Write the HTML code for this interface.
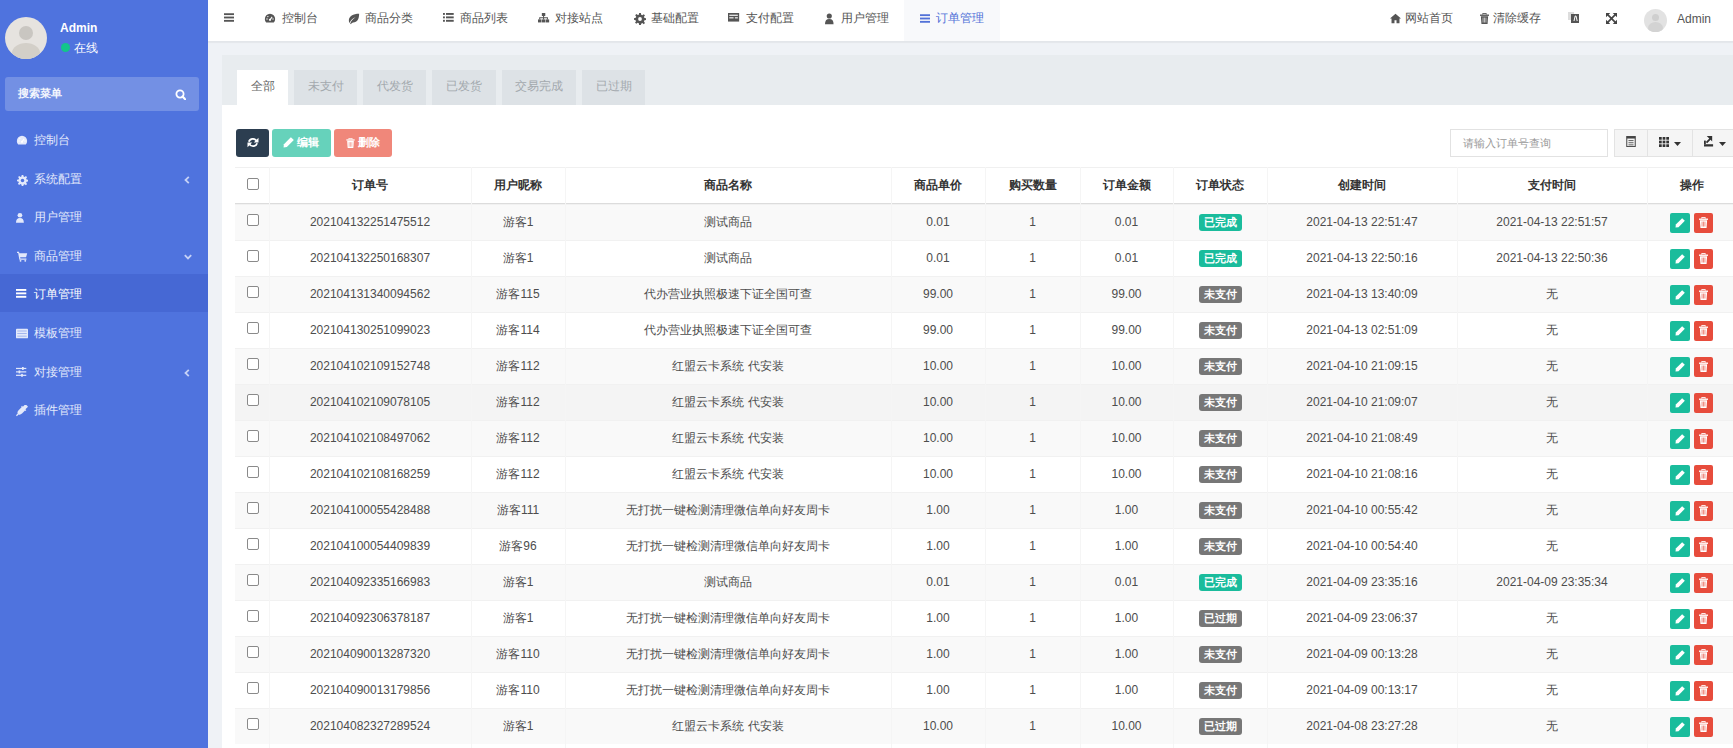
<!DOCTYPE html><html><head><meta charset="utf-8"><style>
*{box-sizing:border-box;margin:0;padding:0}
html,body{width:1733px;height:748px;overflow:hidden}
body{position:relative;background:#eff2f6;font-family:"Liberation Sans",sans-serif;font-size:12px;color:#333}
.abs{position:absolute}
#side{left:0;top:0;width:208px;height:748px;background:#4f73de}
.mi{position:absolute;left:0;width:208px;height:38px;color:#e8eefc;font-size:12px;line-height:40px}
.mi svg{position:absolute;left:16px;top:15px}
.mi span{position:absolute;left:34px;top:0}
.mi .chev{position:absolute;left:185px;top:15px}
#hdr{left:208px;top:0;width:1525px;height:42px;background:#fff;border-bottom:1px solid #e3e6ea;box-shadow:0 1px 1px rgba(0,0,0,.04)}
.nav{position:absolute;top:0;height:41px;line-height:37px;color:#555;font-size:12px;white-space:nowrap}
.nav svg{position:absolute}
#panel{left:222px;top:55px;width:1511px;height:693px;background:#fff}
#ph{left:222px;top:55px;width:1511px;height:50px;background:#e8ecef}
.tab{position:absolute;top:70px;height:35px;line-height:33px;background:#dde2e6;color:#a3a9ae;text-align:center;font-size:12px}
.tab.act{background:#fff;color:#666}
.btn{position:absolute;top:129px;height:28px;border-radius:3px;color:#fff;font-size:11px;font-weight:bold;line-height:28px}
.cell{position:absolute;text-align:center;white-space:nowrap;overflow:hidden}
.vl{position:absolute;width:1px;background:#f5f5f5}
.hl{position:absolute;height:1px;background:#e5e5e5}
.cb{position:absolute;left:247px;width:12px;height:12px;border:1px solid #8a8a8a;border-radius:2px;background:#fff}
.badge{display:inline-block;height:17px;line-height:17px;padding:0 5px;border-radius:3px;color:#fff;font-size:11px;font-weight:bold;vertical-align:middle}
.op{position:absolute;width:20px;height:20px;border-radius:2px}
</style></head><body>
<div id="side" class="abs">
<div class="abs" style="left:5px;top:17px;width:42px;height:42px;border-radius:50%;background:#e6e3df;overflow:hidden"><div class="abs" style="left:14px;top:9px;width:14px;height:14px;border-radius:50%;background:#c9c6c1"></div><div class="abs" style="left:7px;top:26px;width:28px;height:20px;border-radius:50%;background:#d3cfc8"></div></div>
<div class="abs" style="left:60px;top:20px;color:#fff;font-weight:bold;font-size:12px;line-height:16px">Admin</div>
<div class="abs" style="left:61px;top:43px;width:9px;height:9px;border-radius:50%;background:#12c58a"></div>
<div class="abs" style="left:74px;top:41px;color:#fff;font-size:12px;line-height:15px">在线</div>
<div class="abs" style="left:5px;top:77px;width:194px;height:34px;border-radius:3px;background:#7390e4"></div>
<div class="abs" style="left:18px;top:86px;color:#f4f6fd;font-size:11px;line-height:15px;font-weight:bold">搜索菜单</div>
<svg width="11" height="11" viewBox="0 0 11 11" style="position:absolute;left:175px;top:89px;color:#fff"><circle cx="5" cy="5" r="3.6" stroke="currentColor" stroke-width="1.8" fill="none"/><path d="M7.5 7.5l3 3" stroke="currentColor" stroke-width="2.2" stroke-linecap="round"/></svg>
<div class="mi" style="top:120px;color:#e3e9fb">
<svg width="12" height="12" viewBox="0 0 14 14" style="color:#e3e9fb;left:16px;top:15px"><path d="M7 1a6 6 0 0 0-6 6c0 1.6.6 3 1.6 4.2h8.8A6 6 0 0 0 13 7a6 6 0 0 0-6-6z" fill="currentColor"/><circle cx="7" cy="8" r="1.3" fill="#fff"/><path d="M7 8l2.5-3.5" stroke="#fff" stroke-width="1.2"/><circle cx="3.5" cy="7" r=".8" fill="#fff"/><circle cx="4.5" cy="4.2" r=".8" fill="#fff"/><circle cx="10.5" cy="7" r=".8" fill="#fff"/></svg>
<span>控制台</span>
</div>
<div class="mi" style="top:159px;color:#e3e9fb">
<svg width="11" height="11" viewBox="0 0 14 14" style="color:#e3e9fb;left:17px;top:16px"><path d="M6 0h2l.4 2 1.3.6 1.7-1.2 1.4 1.4-1.2 1.7.6 1.3 2 .4v2l-2 .4-.6 1.3 1.2 1.7-1.4 1.4-1.7-1.2-1.3.6L8 14H6l-.4-2-1.3-.6-1.7 1.2-1.4-1.4 1.2-1.7L1.8 8.4 0 8V6l2-.4.6-1.3-1.2-1.7 1.4-1.4 1.7 1.2L5.6 2z" fill="currentColor"/><circle cx="7" cy="7" r="2.2" fill="#4f73de"/></svg>
<span>系统配置</span>
<svg width="6" height="8" viewBox="0 0 6 8" style="position:absolute;left:184px;top:17px;color:#c5d1f6"><path d="M4.8 0.8L1.5 4l3.3 3.2" stroke="currentColor" stroke-width="1.8" fill="none"/></svg>
</div>
<div class="mi" style="top:197px;color:#e3e9fb">
<svg width="11" height="12" viewBox="0 0 14 14" style="color:#e3e9fb;left:16px;top:15px"><circle cx="5" cy="3.5" r="3" fill="currentColor"/><path d="M0 13c0-4 1.5-6 5-6s5 2 5 6z" fill="currentColor"/></svg>
<span>用户管理</span>
</div>
<div class="mi" style="top:236px;color:#e3e9fb">
<svg width="11" height="11" viewBox="0 0 14 14" style="color:#e3e9fb;left:17px;top:15px"><path d="M0 1h2.5l.5 2H13l-1.5 5H4l.4 1.5H12V11H3L1.5 2.5H0z" fill="currentColor"/><circle cx="4.5" cy="12.5" r="1.2" fill="currentColor"/><circle cx="10.5" cy="12.5" r="1.2" fill="currentColor"/></svg>
<span>商品管理</span>
<svg width="8" height="6" viewBox="0 0 8 6" style="position:absolute;left:184px;top:18px;color:#c5d1f6"><path d="M0.8 1.2L4 4.5l3.2-3.3" stroke="currentColor" stroke-width="1.8" fill="none"/></svg>
</div>
<div class="mi" style="top:274px;background:#4668d4;color:#fff">
<svg width="12" height="12" viewBox="0 0 14 14" style="color:#fff;left:16px;top:15px"><rect x="0" y="0" width="12" height="2.2" fill="currentColor"/><rect x="0" y="4" width="12" height="2.2" fill="currentColor"/><rect x="0" y="8" width="12" height="2.2" fill="currentColor"/></svg>
<span>订单管理</span>
</div>
<div class="mi" style="top:313px;color:#e3e9fb">
<svg width="12" height="12" viewBox="0 0 14 14" style="color:#e3e9fb;left:16px;top:15px"><rect x="0" y="1" width="14" height="11" rx="1" fill="currentColor"/><rect x="1.5" y="3" width="11" height="1" fill="#4f73de" opacity=".5"/><rect x="1.5" y="6" width="11" height="1" fill="#4f73de" opacity=".5"/><rect x="1.5" y="9" width="11" height="1" fill="#4f73de" opacity=".5"/></svg>
<span>模板管理</span>
</div>
<div class="mi" style="top:352px;color:#e3e9fb">
<svg width="12" height="12" viewBox="0 0 14 14" style="color:#e3e9fb;left:16px;top:15px"><rect x="0" y="1" width="12" height="1.4" fill="currentColor"/><rect x="0" y="5" width="12" height="1.4" fill="currentColor"/><rect x="0" y="9" width="12" height="1.4" fill="currentColor"/><rect x="7" y="0" width="2" height="3.4" fill="currentColor"/><rect x="3" y="4" width="2" height="3.4" fill="currentColor"/><rect x="6" y="8" width="2" height="3.4" fill="currentColor"/></svg>
<span>对接管理</span>
<svg width="6" height="8" viewBox="0 0 6 8" style="position:absolute;left:184px;top:17px;color:#c5d1f6"><path d="M4.8 0.8L1.5 4l3.3 3.2" stroke="currentColor" stroke-width="1.8" fill="none"/></svg>
</div>
<div class="mi" style="top:390px;color:#e3e9fb">
<svg width="12" height="12" viewBox="0 0 14 14" style="color:#e3e9fb;left:16px;top:15px"><path d="M12 0l1 1-3 3 1 1-1 1-.5-.5L6 9c-1.5 1.5-3 1.5-4 1l-2 2-1-1 2-2c-.5-1-.5-2.5 1-4l3.5-3.5L5 1l1-1 1 1 3-3z" fill="currentColor" transform="translate(1,1)"/></svg>
<span>插件管理</span>
</div>
</div>
<div id="hdr" class="abs">
<svg width="10" height="9" viewBox="0 0 12 10.2" style="position:absolute;left:16px;top:13px;color:#555"><rect x="0" y="0" width="12" height="2.2" fill="currentColor"/><rect x="0" y="4" width="12" height="2.2" fill="currentColor"/><rect x="0" y="8" width="12" height="2.2" fill="currentColor"/></svg>
<div class="nav" style="left:74px">控制台</div>
<svg width="12" height="12" viewBox="0 0 14 14" style="position:absolute;left:56px;top:13px;color:#555"><path d="M7 1a6 6 0 0 0-6 6c0 1.6.6 3 1.6 4.2h8.8A6 6 0 0 0 13 7a6 6 0 0 0-6-6z" fill="currentColor"/><circle cx="7" cy="8" r="1.3" fill="#fff"/><path d="M7 8l2.5-3.5" stroke="#fff" stroke-width="1.2"/><circle cx="3.5" cy="7" r=".8" fill="#fff"/><circle cx="4.5" cy="4.2" r=".8" fill="#fff"/><circle cx="10.5" cy="7" r=".8" fill="#fff"/></svg>
<div class="nav" style="left:157px">商品分类</div>
<svg width="12" height="12" viewBox="0 0 14 14" style="position:absolute;left:140px;top:13px;color:#555"><path d="M13 1C6 1 1 4 1 9c0 1 .3 2 .8 2.8C3 8 6 6 9 5 6 7 3.5 9 2.5 12.5l1 .5C4 12 5 11 6 11c5 0 7-4 7-10z" fill="currentColor"/></svg>
<div class="nav" style="left:252px">商品列表</div>
<svg width="12" height="12" viewBox="0 0 14 14" style="position:absolute;left:235px;top:13px;color:#555"><rect x="0" y="0" width="2.2" height="2.2" fill="currentColor"/><rect x="0" y="4" width="2.2" height="2.2" fill="currentColor"/><rect x="0" y="8" width="2.2" height="2.2" fill="currentColor"/><rect x="3.5" y="0" width="9" height="2.2" fill="currentColor"/><rect x="3.5" y="4" width="9" height="2.2" fill="currentColor"/><rect x="3.5" y="8" width="9" height="2.2" fill="currentColor"/></svg>
<div class="nav" style="left:347px">对接站点</div>
<svg width="12" height="12" viewBox="0 0 14 14" style="position:absolute;left:330px;top:13px;color:#555"><rect x="4.5" y="0" width="4" height="3.5" fill="currentColor"/><rect x="0" y="7.5" width="4" height="3.5" fill="currentColor"/><rect x="4.5" y="7.5" width="4" height="3.5" fill="currentColor"/><rect x="9" y="7.5" width="4" height="3.5" fill="currentColor"/><path d="M6.5 3.5v4M2 7.5V5.5h9v2" stroke="currentColor" stroke-width="1.2" fill="none"/></svg>
<div class="nav" style="left:443px">基础配置</div>
<svg width="12" height="12" viewBox="0 0 14 14" style="position:absolute;left:426px;top:13px;color:#555"><path d="M6 0h2l.4 2 1.3.6 1.7-1.2 1.4 1.4-1.2 1.7.6 1.3 2 .4v2l-2 .4-.6 1.3 1.2 1.7-1.4 1.4-1.7-1.2-1.3.6L8 14H6l-.4-2-1.3-.6-1.7 1.2-1.4-1.4 1.2-1.7L1.8 8.4 0 8V6l2-.4.6-1.3-1.2-1.7 1.4-1.4 1.7 1.2L5.6 2z" fill="currentColor"/><circle cx="7" cy="7" r="2.2" fill="#fff"/></svg>
<div class="nav" style="left:538px">支付配置</div>
<svg width="12" height="12" viewBox="0 0 14 14" style="position:absolute;left:520px;top:13px;color:#555"><rect x="0" y="0" width="13" height="10" fill="currentColor"/><rect x="1.5" y="2" width="10" height="1.3" fill="#fff"/><rect x="1.5" y="5" width="5" height="1.3" fill="#fff"/><rect x="8" y="5" width="3.5" height="1.3" fill="#fff"/></svg>
<div class="nav" style="left:633px">用户管理</div>
<svg width="12" height="12" viewBox="0 0 14 14" style="position:absolute;left:617px;top:13px;color:#555"><circle cx="5" cy="3.5" r="3" fill="currentColor"/><path d="M0 13c0-4 1.5-6 5-6s5 2 5 6z" fill="currentColor"/></svg>
<div class="abs" style="left:696px;top:0;width:96px;height:41px;background:#f8f9fb"></div>
<svg width="10" height="9" viewBox="0 0 12 10.2" style="position:absolute;left:712px;top:14px;color:#5272d8"><rect x="0" y="0" width="12" height="2.2" fill="currentColor"/><rect x="0" y="4" width="12" height="2.2" fill="currentColor"/><rect x="0" y="8" width="12" height="2.2" fill="currentColor"/></svg>
<div class="nav" style="left:728px;color:#5272d8">订单管理</div>
<svg width="11" height="11" viewBox="0 0 13 11" style="position:absolute;left:1182px;top:13px;color:#555"><path d="M6.5 0L0 5.5h1.8V11h3.5V7.5h2.4V11h3.5V5.5H13z" fill="currentColor"/></svg>
<div class="nav" style="left:1197px">网站首页</div>
<svg width="9" height="11" viewBox="0 0 10 12" style="position:absolute;left:1272px;top:13px;color:#555"><path d="M3 1.6V0.4h4v1.2" fill="none" stroke="currentColor" stroke-width="1"/><rect x="0" y="1.6" width="10" height="1.5" fill="currentColor"/><path d="M1 3.4h8l-.6 8.6H1.6z" fill="currentColor"/><path d="M3.4 5v5.5M5 5v5.5M6.6 5v5.5" stroke="#fff" stroke-width=".7"/></svg>
<div class="nav" style="left:1285px">清除缓存</div>
<svg width="11" height="12" viewBox="0 0 11 12" style="position:absolute;left:1360px;top:11px;color:#555"><path d="M0 1h6v8H0z" fill="#ddd"/><path d="M3 3h8v9H3z" fill="currentColor"/><path d="M6 10l1.2-5h.8L9.2 10" stroke="#fff" stroke-width="1" fill="none"/></svg>
<svg width="11" height="11" viewBox="0 0 13 13" style="position:absolute;left:1398px;top:13px;color:#444"><g fill="currentColor"><path d="M0 0h5L0 5z"/><path d="M13 0v5L8 0z"/><path d="M0 13V8l5 5z"/><path d="M13 13H8l5-5z"/></g><path d="M2 2l9 9M11 2l-9 9" stroke="currentColor" stroke-width="2"/></svg>
<div class="abs" style="left:1436px;top:9px;width:23px;height:23px;border-radius:50%;background:#e2e2e2;overflow:hidden"><div class="abs" style="left:8px;top:5px;width:7px;height:7px;border-radius:50%;background:#cfcfcf"></div><div class="abs" style="left:4px;top:13px;width:15px;height:12px;border-radius:50%;background:#d3d3d3"></div></div>
<div class="nav" style="left:1469px;line-height:39px;font-size:12px">Admin</div>
</div>
<div id="panel" class="abs"></div>
<div id="ph" class="abs"></div>
<div class="tab act" style="left:237px;width:51px">全部</div>
<div class="tab" style="left:294px;width:63px">未支付</div>
<div class="tab" style="left:363px;width:63px">代发货</div>
<div class="tab" style="left:432px;width:64px">已发货</div>
<div class="tab" style="left:502px;width:74px">交易完成</div>
<div class="tab" style="left:582px;width:63px">已过期</div>
<div class="btn" style="left:236px;width:33px;background:#2c3e50"></div>
<svg width="12" height="11" viewBox="0 0 12 12" style="position:absolute;left:247px;top:137px;color:#fff"><g fill="none" stroke="currentColor" stroke-width="2"><path d="M10 4.6A4.6 4.6 0 0 0 1.5 5.2"/><path d="M2 7.4A4.6 4.6 0 0 0 10.5 6.8"/></g><path d="M12 0.8V6H6.8z" fill="currentColor"/><path d="M0 11.2V6h5.2z" fill="currentColor"/></svg>
<div class="btn" style="left:272px;width:59px;background:#66d2bb"><span style="position:absolute;left:25px;top:-1px">编辑</span></div>
<svg width="11" height="11" viewBox="0 0 12 12" style="position:absolute;left:283px;top:137px;color:#fff"><path d="M8.6 0.2l3.2 3.2-7.6 7.6L0.6 11.4 1 7.8z" fill="currentColor"/></svg>
<div class="btn" style="left:334px;width:58px;background:#f0877a"><span style="position:absolute;left:24px;top:-1px">删除</span></div>
<svg width="9" height="10" viewBox="0 0 10 12" style="position:absolute;left:346px;top:138px;color:#fff"><path d="M3 1.6V0.4h4v1.2" fill="none" stroke="currentColor" stroke-width="1"/><rect x="0" y="1.6" width="10" height="1.5" fill="currentColor"/><path d="M1 3.4h8l-.6 8.6H1.6z" fill="currentColor"/><path d="M3.4 5v5.5M5 5v5.5M6.6 5v5.5" stroke="#f0877a" stroke-width=".7"/></svg>
<div class="abs" style="left:1450px;top:129px;width:158px;height:28px;border:1px solid #e2e2e2;background:#fff;color:#999;font-size:11px;line-height:26px;padding-left:12px">请输入订单号查询</div>
<div class="abs" style="left:1614px;top:129px;width:130px;height:28px;border:1px solid #e3e3e3;background:#f5f5f5"></div>
<div class="abs" style="left:1647px;top:129px;width:1px;height:28px;background:#e3e3e3"></div>
<div class="abs" style="left:1692px;top:129px;width:1px;height:28px;background:#e3e3e3"></div>
<svg width="10" height="11" viewBox="0 0 11 13" style="position:absolute;left:1626px;top:136px;color:#444"><rect x="0.5" y="0.5" width="10" height="12" fill="none" stroke="currentColor" stroke-width="1.2"/><rect x="0.5" y="0.5" width="10" height="2.5" fill="currentColor"/><rect x="2.5" y="5" width="6" height="1" fill="currentColor"/><rect x="2.5" y="7.5" width="6" height="1" fill="currentColor"/><rect x="2.5" y="10" width="6" height="1" fill="currentColor"/></svg>
<svg width="10" height="10" viewBox="0 0 11 11" style="position:absolute;left:1659px;top:137px;color:#333"><g fill="currentColor"><rect x="0" y="0" width="3" height="3"/><rect x="4" y="0" width="3" height="3"/><rect x="8" y="0" width="3" height="3"/><rect x="0" y="4" width="3" height="3"/><rect x="4" y="4" width="3" height="3"/><rect x="8" y="4" width="3" height="3"/><rect x="0" y="8" width="3" height="3"/><rect x="4" y="8" width="3" height="3"/><rect x="8" y="8" width="3" height="3"/></g></svg>
<svg width="7" height="4" viewBox="0 0 7 4" style="position:absolute;left:1674px;top:142px;color:#333"><path d="M0 0h7L3.5 4z" fill="currentColor"/></svg>
<svg width="10" height="11" viewBox="0 0 11 12" style="position:absolute;left:1704px;top:136px;color:#333"><rect x="0" y="9" width="10" height="2.5" fill="currentColor"/><path d="M3 0h6v6L7.2 4.2 3.5 8 2 6.5l3.8-3.7z" fill="currentColor"/><rect x="0" y="5" width="2" height="4" fill="currentColor"/></svg>
<svg width="7" height="4" viewBox="0 0 7 4" style="position:absolute;left:1719px;top:142px;color:#333"><path d="M0 0h7L3.5 4z" fill="currentColor"/></svg>
<div class="abs" style="left:235px;top:167px;width:1501px;height:37px;background:#fff;border-top:1px solid #f0f0f0"></div>
<div class="abs" style="left:235px;top:204px;width:1501px;height:36px;background:#f9f9f9;border-top:1px solid #f1f1f1"></div>
<div class="abs" style="left:235px;top:240px;width:1501px;height:36px;background:#fff;border-top:1px solid #f1f1f1"></div>
<div class="abs" style="left:235px;top:276px;width:1501px;height:36px;background:#f9f9f9;border-top:1px solid #f1f1f1"></div>
<div class="abs" style="left:235px;top:312px;width:1501px;height:36px;background:#fff;border-top:1px solid #f1f1f1"></div>
<div class="abs" style="left:235px;top:348px;width:1501px;height:36px;background:#f9f9f9;border-top:1px solid #f1f1f1"></div>
<div class="abs" style="left:235px;top:384px;width:1501px;height:36px;background:#f4f4f4;border-top:1px solid #f1f1f1"></div>
<div class="abs" style="left:235px;top:420px;width:1501px;height:36px;background:#f9f9f9;border-top:1px solid #f1f1f1"></div>
<div class="abs" style="left:235px;top:456px;width:1501px;height:36px;background:#fff;border-top:1px solid #f1f1f1"></div>
<div class="abs" style="left:235px;top:492px;width:1501px;height:36px;background:#f9f9f9;border-top:1px solid #f1f1f1"></div>
<div class="abs" style="left:235px;top:528px;width:1501px;height:36px;background:#fff;border-top:1px solid #f1f1f1"></div>
<div class="abs" style="left:235px;top:564px;width:1501px;height:36px;background:#f9f9f9;border-top:1px solid #f1f1f1"></div>
<div class="abs" style="left:235px;top:600px;width:1501px;height:36px;background:#fff;border-top:1px solid #f1f1f1"></div>
<div class="abs" style="left:235px;top:636px;width:1501px;height:36px;background:#f9f9f9;border-top:1px solid #f1f1f1"></div>
<div class="abs" style="left:235px;top:672px;width:1501px;height:36px;background:#fff;border-top:1px solid #f1f1f1"></div>
<div class="abs" style="left:235px;top:708px;width:1501px;height:36px;background:#f9f9f9;border-top:1px solid #f1f1f1"></div>
<div class="hl" style="left:235px;top:203px;width:1501px;background:#dcdcdc"></div>
<div class="vl" style="left:269px;top:167px;height:581px"></div>
<div class="vl" style="left:471px;top:167px;height:581px"></div>
<div class="vl" style="left:565px;top:167px;height:581px"></div>
<div class="vl" style="left:891px;top:167px;height:581px"></div>
<div class="vl" style="left:985px;top:167px;height:581px"></div>
<div class="vl" style="left:1080px;top:167px;height:581px"></div>
<div class="vl" style="left:1173px;top:167px;height:581px"></div>
<div class="vl" style="left:1267px;top:167px;height:581px"></div>
<div class="vl" style="left:1457px;top:167px;height:581px"></div>
<div class="vl" style="left:1647px;top:167px;height:581px"></div>
<div class="cb" style="top:178px"></div>
<div class="cell" style="left:269px;width:202px;top:167px;height:37px;line-height:37px;font-weight:bold;color:#333">订单号</div>
<div class="cell" style="left:471px;width:94px;top:167px;height:37px;line-height:37px;font-weight:bold;color:#333">用户昵称</div>
<div class="cell" style="left:565px;width:326px;top:167px;height:37px;line-height:37px;font-weight:bold;color:#333">商品名称</div>
<div class="cell" style="left:891px;width:94px;top:167px;height:37px;line-height:37px;font-weight:bold;color:#333">商品单价</div>
<div class="cell" style="left:985px;width:95px;top:167px;height:37px;line-height:37px;font-weight:bold;color:#333">购买数量</div>
<div class="cell" style="left:1080px;width:93px;top:167px;height:37px;line-height:37px;font-weight:bold;color:#333">订单金额</div>
<div class="cell" style="left:1173px;width:94px;top:167px;height:37px;line-height:37px;font-weight:bold;color:#333">订单状态</div>
<div class="cell" style="left:1267px;width:190px;top:167px;height:37px;line-height:37px;font-weight:bold;color:#333">创建时间</div>
<div class="cell" style="left:1457px;width:190px;top:167px;height:37px;line-height:37px;font-weight:bold;color:#333">支付时间</div>
<div class="cell" style="left:1647px;width:89px;top:167px;height:37px;line-height:37px;font-weight:bold;color:#333">操作</div>
<div class="cb" style="top:214px"></div>
<div class="cell" style="left:269px;width:202px;top:204px;height:36px;line-height:36px;color:#4d4d4d">202104132251475512</div>
<div class="cell" style="left:471px;width:94px;top:204px;height:36px;line-height:36px;color:#4d4d4d">游客1</div>
<div class="cell" style="left:565px;width:326px;top:204px;height:36px;line-height:36px;color:#4d4d4d">测试商品</div>
<div class="cell" style="left:891px;width:94px;top:204px;height:36px;line-height:36px;color:#4d4d4d">0.01</div>
<div class="cell" style="left:985px;width:95px;top:204px;height:36px;line-height:36px;color:#4d4d4d">1</div>
<div class="cell" style="left:1080px;width:93px;top:204px;height:36px;line-height:36px;color:#4d4d4d">0.01</div>
<div class="cell" style="left:1173px;width:94px;top:204px;height:36px;line-height:36px;color:#4d4d4d"><span class="badge" style="background:#1abc9c">已完成</span></div>
<div class="cell" style="left:1267px;width:190px;top:204px;height:36px;line-height:36px;color:#4d4d4d">2021-04-13 22:51:47</div>
<div class="cell" style="left:1457px;width:190px;top:204px;height:36px;line-height:36px;color:#4d4d4d">2021-04-13 22:51:57</div>
<div class="op" style="left:1670px;top:213px;background:#1abc9c"></div>
<svg width="10" height="10" viewBox="0 0 12 12" style="position:absolute;left:1675px;top:218px;color:#fff"><path d="M8.6 0.2l3.2 3.2-7.6 7.6L0.6 11.4 1 7.8z" fill="currentColor"/></svg>
<div class="op" style="left:1694px;width:19px;top:213px;background:#e74c3c"></div>
<svg width="9" height="11" viewBox="0 0 10 12" style="position:absolute;left:1699px;top:217px;color:#fff"><path d="M3 1.6V0.4h4v1.2" fill="none" stroke="currentColor" stroke-width="1"/><rect x="0" y="1.6" width="10" height="1.5" fill="currentColor"/><path d="M1 3.4h8l-.6 8.6H1.6z" fill="currentColor"/><path d="M3.4 5v5.5M5 5v5.5M6.6 5v5.5" stroke="#e74c3c" stroke-width=".7"/></svg>
<div class="cb" style="top:250px"></div>
<div class="cell" style="left:269px;width:202px;top:240px;height:36px;line-height:36px;color:#4d4d4d">202104132250168307</div>
<div class="cell" style="left:471px;width:94px;top:240px;height:36px;line-height:36px;color:#4d4d4d">游客1</div>
<div class="cell" style="left:565px;width:326px;top:240px;height:36px;line-height:36px;color:#4d4d4d">测试商品</div>
<div class="cell" style="left:891px;width:94px;top:240px;height:36px;line-height:36px;color:#4d4d4d">0.01</div>
<div class="cell" style="left:985px;width:95px;top:240px;height:36px;line-height:36px;color:#4d4d4d">1</div>
<div class="cell" style="left:1080px;width:93px;top:240px;height:36px;line-height:36px;color:#4d4d4d">0.01</div>
<div class="cell" style="left:1173px;width:94px;top:240px;height:36px;line-height:36px;color:#4d4d4d"><span class="badge" style="background:#1abc9c">已完成</span></div>
<div class="cell" style="left:1267px;width:190px;top:240px;height:36px;line-height:36px;color:#4d4d4d">2021-04-13 22:50:16</div>
<div class="cell" style="left:1457px;width:190px;top:240px;height:36px;line-height:36px;color:#4d4d4d">2021-04-13 22:50:36</div>
<div class="op" style="left:1670px;top:249px;background:#1abc9c"></div>
<svg width="10" height="10" viewBox="0 0 12 12" style="position:absolute;left:1675px;top:254px;color:#fff"><path d="M8.6 0.2l3.2 3.2-7.6 7.6L0.6 11.4 1 7.8z" fill="currentColor"/></svg>
<div class="op" style="left:1694px;width:19px;top:249px;background:#e74c3c"></div>
<svg width="9" height="11" viewBox="0 0 10 12" style="position:absolute;left:1699px;top:253px;color:#fff"><path d="M3 1.6V0.4h4v1.2" fill="none" stroke="currentColor" stroke-width="1"/><rect x="0" y="1.6" width="10" height="1.5" fill="currentColor"/><path d="M1 3.4h8l-.6 8.6H1.6z" fill="currentColor"/><path d="M3.4 5v5.5M5 5v5.5M6.6 5v5.5" stroke="#e74c3c" stroke-width=".7"/></svg>
<div class="cb" style="top:286px"></div>
<div class="cell" style="left:269px;width:202px;top:276px;height:36px;line-height:36px;color:#4d4d4d">202104131340094562</div>
<div class="cell" style="left:471px;width:94px;top:276px;height:36px;line-height:36px;color:#4d4d4d">游客115</div>
<div class="cell" style="left:565px;width:326px;top:276px;height:36px;line-height:36px;color:#4d4d4d">代办营业执照极速下证全国可查</div>
<div class="cell" style="left:891px;width:94px;top:276px;height:36px;line-height:36px;color:#4d4d4d">99.00</div>
<div class="cell" style="left:985px;width:95px;top:276px;height:36px;line-height:36px;color:#4d4d4d">1</div>
<div class="cell" style="left:1080px;width:93px;top:276px;height:36px;line-height:36px;color:#4d4d4d">99.00</div>
<div class="cell" style="left:1173px;width:94px;top:276px;height:36px;line-height:36px;color:#4d4d4d"><span class="badge" style="background:#777">未支付</span></div>
<div class="cell" style="left:1267px;width:190px;top:276px;height:36px;line-height:36px;color:#4d4d4d">2021-04-13 13:40:09</div>
<div class="cell" style="left:1457px;width:190px;top:276px;height:36px;line-height:36px;color:#4d4d4d">无</div>
<div class="op" style="left:1670px;top:285px;background:#1abc9c"></div>
<svg width="10" height="10" viewBox="0 0 12 12" style="position:absolute;left:1675px;top:290px;color:#fff"><path d="M8.6 0.2l3.2 3.2-7.6 7.6L0.6 11.4 1 7.8z" fill="currentColor"/></svg>
<div class="op" style="left:1694px;width:19px;top:285px;background:#e74c3c"></div>
<svg width="9" height="11" viewBox="0 0 10 12" style="position:absolute;left:1699px;top:289px;color:#fff"><path d="M3 1.6V0.4h4v1.2" fill="none" stroke="currentColor" stroke-width="1"/><rect x="0" y="1.6" width="10" height="1.5" fill="currentColor"/><path d="M1 3.4h8l-.6 8.6H1.6z" fill="currentColor"/><path d="M3.4 5v5.5M5 5v5.5M6.6 5v5.5" stroke="#e74c3c" stroke-width=".7"/></svg>
<div class="cb" style="top:322px"></div>
<div class="cell" style="left:269px;width:202px;top:312px;height:36px;line-height:36px;color:#4d4d4d">202104130251099023</div>
<div class="cell" style="left:471px;width:94px;top:312px;height:36px;line-height:36px;color:#4d4d4d">游客114</div>
<div class="cell" style="left:565px;width:326px;top:312px;height:36px;line-height:36px;color:#4d4d4d">代办营业执照极速下证全国可查</div>
<div class="cell" style="left:891px;width:94px;top:312px;height:36px;line-height:36px;color:#4d4d4d">99.00</div>
<div class="cell" style="left:985px;width:95px;top:312px;height:36px;line-height:36px;color:#4d4d4d">1</div>
<div class="cell" style="left:1080px;width:93px;top:312px;height:36px;line-height:36px;color:#4d4d4d">99.00</div>
<div class="cell" style="left:1173px;width:94px;top:312px;height:36px;line-height:36px;color:#4d4d4d"><span class="badge" style="background:#777">未支付</span></div>
<div class="cell" style="left:1267px;width:190px;top:312px;height:36px;line-height:36px;color:#4d4d4d">2021-04-13 02:51:09</div>
<div class="cell" style="left:1457px;width:190px;top:312px;height:36px;line-height:36px;color:#4d4d4d">无</div>
<div class="op" style="left:1670px;top:321px;background:#1abc9c"></div>
<svg width="10" height="10" viewBox="0 0 12 12" style="position:absolute;left:1675px;top:326px;color:#fff"><path d="M8.6 0.2l3.2 3.2-7.6 7.6L0.6 11.4 1 7.8z" fill="currentColor"/></svg>
<div class="op" style="left:1694px;width:19px;top:321px;background:#e74c3c"></div>
<svg width="9" height="11" viewBox="0 0 10 12" style="position:absolute;left:1699px;top:325px;color:#fff"><path d="M3 1.6V0.4h4v1.2" fill="none" stroke="currentColor" stroke-width="1"/><rect x="0" y="1.6" width="10" height="1.5" fill="currentColor"/><path d="M1 3.4h8l-.6 8.6H1.6z" fill="currentColor"/><path d="M3.4 5v5.5M5 5v5.5M6.6 5v5.5" stroke="#e74c3c" stroke-width=".7"/></svg>
<div class="cb" style="top:358px"></div>
<div class="cell" style="left:269px;width:202px;top:348px;height:36px;line-height:36px;color:#4d4d4d">202104102109152748</div>
<div class="cell" style="left:471px;width:94px;top:348px;height:36px;line-height:36px;color:#4d4d4d">游客112</div>
<div class="cell" style="left:565px;width:326px;top:348px;height:36px;line-height:36px;color:#4d4d4d">红盟云卡系统 代安装</div>
<div class="cell" style="left:891px;width:94px;top:348px;height:36px;line-height:36px;color:#4d4d4d">10.00</div>
<div class="cell" style="left:985px;width:95px;top:348px;height:36px;line-height:36px;color:#4d4d4d">1</div>
<div class="cell" style="left:1080px;width:93px;top:348px;height:36px;line-height:36px;color:#4d4d4d">10.00</div>
<div class="cell" style="left:1173px;width:94px;top:348px;height:36px;line-height:36px;color:#4d4d4d"><span class="badge" style="background:#777">未支付</span></div>
<div class="cell" style="left:1267px;width:190px;top:348px;height:36px;line-height:36px;color:#4d4d4d">2021-04-10 21:09:15</div>
<div class="cell" style="left:1457px;width:190px;top:348px;height:36px;line-height:36px;color:#4d4d4d">无</div>
<div class="op" style="left:1670px;top:357px;background:#1abc9c"></div>
<svg width="10" height="10" viewBox="0 0 12 12" style="position:absolute;left:1675px;top:362px;color:#fff"><path d="M8.6 0.2l3.2 3.2-7.6 7.6L0.6 11.4 1 7.8z" fill="currentColor"/></svg>
<div class="op" style="left:1694px;width:19px;top:357px;background:#e74c3c"></div>
<svg width="9" height="11" viewBox="0 0 10 12" style="position:absolute;left:1699px;top:361px;color:#fff"><path d="M3 1.6V0.4h4v1.2" fill="none" stroke="currentColor" stroke-width="1"/><rect x="0" y="1.6" width="10" height="1.5" fill="currentColor"/><path d="M1 3.4h8l-.6 8.6H1.6z" fill="currentColor"/><path d="M3.4 5v5.5M5 5v5.5M6.6 5v5.5" stroke="#e74c3c" stroke-width=".7"/></svg>
<div class="cb" style="top:394px"></div>
<div class="cell" style="left:269px;width:202px;top:384px;height:36px;line-height:36px;color:#4d4d4d">202104102109078105</div>
<div class="cell" style="left:471px;width:94px;top:384px;height:36px;line-height:36px;color:#4d4d4d">游客112</div>
<div class="cell" style="left:565px;width:326px;top:384px;height:36px;line-height:36px;color:#4d4d4d">红盟云卡系统 代安装</div>
<div class="cell" style="left:891px;width:94px;top:384px;height:36px;line-height:36px;color:#4d4d4d">10.00</div>
<div class="cell" style="left:985px;width:95px;top:384px;height:36px;line-height:36px;color:#4d4d4d">1</div>
<div class="cell" style="left:1080px;width:93px;top:384px;height:36px;line-height:36px;color:#4d4d4d">10.00</div>
<div class="cell" style="left:1173px;width:94px;top:384px;height:36px;line-height:36px;color:#4d4d4d"><span class="badge" style="background:#777">未支付</span></div>
<div class="cell" style="left:1267px;width:190px;top:384px;height:36px;line-height:36px;color:#4d4d4d">2021-04-10 21:09:07</div>
<div class="cell" style="left:1457px;width:190px;top:384px;height:36px;line-height:36px;color:#4d4d4d">无</div>
<div class="op" style="left:1670px;top:393px;background:#1abc9c"></div>
<svg width="10" height="10" viewBox="0 0 12 12" style="position:absolute;left:1675px;top:398px;color:#fff"><path d="M8.6 0.2l3.2 3.2-7.6 7.6L0.6 11.4 1 7.8z" fill="currentColor"/></svg>
<div class="op" style="left:1694px;width:19px;top:393px;background:#e74c3c"></div>
<svg width="9" height="11" viewBox="0 0 10 12" style="position:absolute;left:1699px;top:397px;color:#fff"><path d="M3 1.6V0.4h4v1.2" fill="none" stroke="currentColor" stroke-width="1"/><rect x="0" y="1.6" width="10" height="1.5" fill="currentColor"/><path d="M1 3.4h8l-.6 8.6H1.6z" fill="currentColor"/><path d="M3.4 5v5.5M5 5v5.5M6.6 5v5.5" stroke="#e74c3c" stroke-width=".7"/></svg>
<div class="cb" style="top:430px"></div>
<div class="cell" style="left:269px;width:202px;top:420px;height:36px;line-height:36px;color:#4d4d4d">202104102108497062</div>
<div class="cell" style="left:471px;width:94px;top:420px;height:36px;line-height:36px;color:#4d4d4d">游客112</div>
<div class="cell" style="left:565px;width:326px;top:420px;height:36px;line-height:36px;color:#4d4d4d">红盟云卡系统 代安装</div>
<div class="cell" style="left:891px;width:94px;top:420px;height:36px;line-height:36px;color:#4d4d4d">10.00</div>
<div class="cell" style="left:985px;width:95px;top:420px;height:36px;line-height:36px;color:#4d4d4d">1</div>
<div class="cell" style="left:1080px;width:93px;top:420px;height:36px;line-height:36px;color:#4d4d4d">10.00</div>
<div class="cell" style="left:1173px;width:94px;top:420px;height:36px;line-height:36px;color:#4d4d4d"><span class="badge" style="background:#777">未支付</span></div>
<div class="cell" style="left:1267px;width:190px;top:420px;height:36px;line-height:36px;color:#4d4d4d">2021-04-10 21:08:49</div>
<div class="cell" style="left:1457px;width:190px;top:420px;height:36px;line-height:36px;color:#4d4d4d">无</div>
<div class="op" style="left:1670px;top:429px;background:#1abc9c"></div>
<svg width="10" height="10" viewBox="0 0 12 12" style="position:absolute;left:1675px;top:434px;color:#fff"><path d="M8.6 0.2l3.2 3.2-7.6 7.6L0.6 11.4 1 7.8z" fill="currentColor"/></svg>
<div class="op" style="left:1694px;width:19px;top:429px;background:#e74c3c"></div>
<svg width="9" height="11" viewBox="0 0 10 12" style="position:absolute;left:1699px;top:433px;color:#fff"><path d="M3 1.6V0.4h4v1.2" fill="none" stroke="currentColor" stroke-width="1"/><rect x="0" y="1.6" width="10" height="1.5" fill="currentColor"/><path d="M1 3.4h8l-.6 8.6H1.6z" fill="currentColor"/><path d="M3.4 5v5.5M5 5v5.5M6.6 5v5.5" stroke="#e74c3c" stroke-width=".7"/></svg>
<div class="cb" style="top:466px"></div>
<div class="cell" style="left:269px;width:202px;top:456px;height:36px;line-height:36px;color:#4d4d4d">202104102108168259</div>
<div class="cell" style="left:471px;width:94px;top:456px;height:36px;line-height:36px;color:#4d4d4d">游客112</div>
<div class="cell" style="left:565px;width:326px;top:456px;height:36px;line-height:36px;color:#4d4d4d">红盟云卡系统 代安装</div>
<div class="cell" style="left:891px;width:94px;top:456px;height:36px;line-height:36px;color:#4d4d4d">10.00</div>
<div class="cell" style="left:985px;width:95px;top:456px;height:36px;line-height:36px;color:#4d4d4d">1</div>
<div class="cell" style="left:1080px;width:93px;top:456px;height:36px;line-height:36px;color:#4d4d4d">10.00</div>
<div class="cell" style="left:1173px;width:94px;top:456px;height:36px;line-height:36px;color:#4d4d4d"><span class="badge" style="background:#777">未支付</span></div>
<div class="cell" style="left:1267px;width:190px;top:456px;height:36px;line-height:36px;color:#4d4d4d">2021-04-10 21:08:16</div>
<div class="cell" style="left:1457px;width:190px;top:456px;height:36px;line-height:36px;color:#4d4d4d">无</div>
<div class="op" style="left:1670px;top:465px;background:#1abc9c"></div>
<svg width="10" height="10" viewBox="0 0 12 12" style="position:absolute;left:1675px;top:470px;color:#fff"><path d="M8.6 0.2l3.2 3.2-7.6 7.6L0.6 11.4 1 7.8z" fill="currentColor"/></svg>
<div class="op" style="left:1694px;width:19px;top:465px;background:#e74c3c"></div>
<svg width="9" height="11" viewBox="0 0 10 12" style="position:absolute;left:1699px;top:469px;color:#fff"><path d="M3 1.6V0.4h4v1.2" fill="none" stroke="currentColor" stroke-width="1"/><rect x="0" y="1.6" width="10" height="1.5" fill="currentColor"/><path d="M1 3.4h8l-.6 8.6H1.6z" fill="currentColor"/><path d="M3.4 5v5.5M5 5v5.5M6.6 5v5.5" stroke="#e74c3c" stroke-width=".7"/></svg>
<div class="cb" style="top:502px"></div>
<div class="cell" style="left:269px;width:202px;top:492px;height:36px;line-height:36px;color:#4d4d4d">202104100055428488</div>
<div class="cell" style="left:471px;width:94px;top:492px;height:36px;line-height:36px;color:#4d4d4d">游客111</div>
<div class="cell" style="left:565px;width:326px;top:492px;height:36px;line-height:36px;color:#4d4d4d">无打扰一键检测清理微信单向好友周卡</div>
<div class="cell" style="left:891px;width:94px;top:492px;height:36px;line-height:36px;color:#4d4d4d">1.00</div>
<div class="cell" style="left:985px;width:95px;top:492px;height:36px;line-height:36px;color:#4d4d4d">1</div>
<div class="cell" style="left:1080px;width:93px;top:492px;height:36px;line-height:36px;color:#4d4d4d">1.00</div>
<div class="cell" style="left:1173px;width:94px;top:492px;height:36px;line-height:36px;color:#4d4d4d"><span class="badge" style="background:#777">未支付</span></div>
<div class="cell" style="left:1267px;width:190px;top:492px;height:36px;line-height:36px;color:#4d4d4d">2021-04-10 00:55:42</div>
<div class="cell" style="left:1457px;width:190px;top:492px;height:36px;line-height:36px;color:#4d4d4d">无</div>
<div class="op" style="left:1670px;top:501px;background:#1abc9c"></div>
<svg width="10" height="10" viewBox="0 0 12 12" style="position:absolute;left:1675px;top:506px;color:#fff"><path d="M8.6 0.2l3.2 3.2-7.6 7.6L0.6 11.4 1 7.8z" fill="currentColor"/></svg>
<div class="op" style="left:1694px;width:19px;top:501px;background:#e74c3c"></div>
<svg width="9" height="11" viewBox="0 0 10 12" style="position:absolute;left:1699px;top:505px;color:#fff"><path d="M3 1.6V0.4h4v1.2" fill="none" stroke="currentColor" stroke-width="1"/><rect x="0" y="1.6" width="10" height="1.5" fill="currentColor"/><path d="M1 3.4h8l-.6 8.6H1.6z" fill="currentColor"/><path d="M3.4 5v5.5M5 5v5.5M6.6 5v5.5" stroke="#e74c3c" stroke-width=".7"/></svg>
<div class="cb" style="top:538px"></div>
<div class="cell" style="left:269px;width:202px;top:528px;height:36px;line-height:36px;color:#4d4d4d">202104100054409839</div>
<div class="cell" style="left:471px;width:94px;top:528px;height:36px;line-height:36px;color:#4d4d4d">游客96</div>
<div class="cell" style="left:565px;width:326px;top:528px;height:36px;line-height:36px;color:#4d4d4d">无打扰一键检测清理微信单向好友周卡</div>
<div class="cell" style="left:891px;width:94px;top:528px;height:36px;line-height:36px;color:#4d4d4d">1.00</div>
<div class="cell" style="left:985px;width:95px;top:528px;height:36px;line-height:36px;color:#4d4d4d">1</div>
<div class="cell" style="left:1080px;width:93px;top:528px;height:36px;line-height:36px;color:#4d4d4d">1.00</div>
<div class="cell" style="left:1173px;width:94px;top:528px;height:36px;line-height:36px;color:#4d4d4d"><span class="badge" style="background:#777">未支付</span></div>
<div class="cell" style="left:1267px;width:190px;top:528px;height:36px;line-height:36px;color:#4d4d4d">2021-04-10 00:54:40</div>
<div class="cell" style="left:1457px;width:190px;top:528px;height:36px;line-height:36px;color:#4d4d4d">无</div>
<div class="op" style="left:1670px;top:537px;background:#1abc9c"></div>
<svg width="10" height="10" viewBox="0 0 12 12" style="position:absolute;left:1675px;top:542px;color:#fff"><path d="M8.6 0.2l3.2 3.2-7.6 7.6L0.6 11.4 1 7.8z" fill="currentColor"/></svg>
<div class="op" style="left:1694px;width:19px;top:537px;background:#e74c3c"></div>
<svg width="9" height="11" viewBox="0 0 10 12" style="position:absolute;left:1699px;top:541px;color:#fff"><path d="M3 1.6V0.4h4v1.2" fill="none" stroke="currentColor" stroke-width="1"/><rect x="0" y="1.6" width="10" height="1.5" fill="currentColor"/><path d="M1 3.4h8l-.6 8.6H1.6z" fill="currentColor"/><path d="M3.4 5v5.5M5 5v5.5M6.6 5v5.5" stroke="#e74c3c" stroke-width=".7"/></svg>
<div class="cb" style="top:574px"></div>
<div class="cell" style="left:269px;width:202px;top:564px;height:36px;line-height:36px;color:#4d4d4d">202104092335166983</div>
<div class="cell" style="left:471px;width:94px;top:564px;height:36px;line-height:36px;color:#4d4d4d">游客1</div>
<div class="cell" style="left:565px;width:326px;top:564px;height:36px;line-height:36px;color:#4d4d4d">测试商品</div>
<div class="cell" style="left:891px;width:94px;top:564px;height:36px;line-height:36px;color:#4d4d4d">0.01</div>
<div class="cell" style="left:985px;width:95px;top:564px;height:36px;line-height:36px;color:#4d4d4d">1</div>
<div class="cell" style="left:1080px;width:93px;top:564px;height:36px;line-height:36px;color:#4d4d4d">0.01</div>
<div class="cell" style="left:1173px;width:94px;top:564px;height:36px;line-height:36px;color:#4d4d4d"><span class="badge" style="background:#1abc9c">已完成</span></div>
<div class="cell" style="left:1267px;width:190px;top:564px;height:36px;line-height:36px;color:#4d4d4d">2021-04-09 23:35:16</div>
<div class="cell" style="left:1457px;width:190px;top:564px;height:36px;line-height:36px;color:#4d4d4d">2021-04-09 23:35:34</div>
<div class="op" style="left:1670px;top:573px;background:#1abc9c"></div>
<svg width="10" height="10" viewBox="0 0 12 12" style="position:absolute;left:1675px;top:578px;color:#fff"><path d="M8.6 0.2l3.2 3.2-7.6 7.6L0.6 11.4 1 7.8z" fill="currentColor"/></svg>
<div class="op" style="left:1694px;width:19px;top:573px;background:#e74c3c"></div>
<svg width="9" height="11" viewBox="0 0 10 12" style="position:absolute;left:1699px;top:577px;color:#fff"><path d="M3 1.6V0.4h4v1.2" fill="none" stroke="currentColor" stroke-width="1"/><rect x="0" y="1.6" width="10" height="1.5" fill="currentColor"/><path d="M1 3.4h8l-.6 8.6H1.6z" fill="currentColor"/><path d="M3.4 5v5.5M5 5v5.5M6.6 5v5.5" stroke="#e74c3c" stroke-width=".7"/></svg>
<div class="cb" style="top:610px"></div>
<div class="cell" style="left:269px;width:202px;top:600px;height:36px;line-height:36px;color:#4d4d4d">202104092306378187</div>
<div class="cell" style="left:471px;width:94px;top:600px;height:36px;line-height:36px;color:#4d4d4d">游客1</div>
<div class="cell" style="left:565px;width:326px;top:600px;height:36px;line-height:36px;color:#4d4d4d">无打扰一键检测清理微信单向好友周卡</div>
<div class="cell" style="left:891px;width:94px;top:600px;height:36px;line-height:36px;color:#4d4d4d">1.00</div>
<div class="cell" style="left:985px;width:95px;top:600px;height:36px;line-height:36px;color:#4d4d4d">1</div>
<div class="cell" style="left:1080px;width:93px;top:600px;height:36px;line-height:36px;color:#4d4d4d">1.00</div>
<div class="cell" style="left:1173px;width:94px;top:600px;height:36px;line-height:36px;color:#4d4d4d"><span class="badge" style="background:#777">已过期</span></div>
<div class="cell" style="left:1267px;width:190px;top:600px;height:36px;line-height:36px;color:#4d4d4d">2021-04-09 23:06:37</div>
<div class="cell" style="left:1457px;width:190px;top:600px;height:36px;line-height:36px;color:#4d4d4d">无</div>
<div class="op" style="left:1670px;top:609px;background:#1abc9c"></div>
<svg width="10" height="10" viewBox="0 0 12 12" style="position:absolute;left:1675px;top:614px;color:#fff"><path d="M8.6 0.2l3.2 3.2-7.6 7.6L0.6 11.4 1 7.8z" fill="currentColor"/></svg>
<div class="op" style="left:1694px;width:19px;top:609px;background:#e74c3c"></div>
<svg width="9" height="11" viewBox="0 0 10 12" style="position:absolute;left:1699px;top:613px;color:#fff"><path d="M3 1.6V0.4h4v1.2" fill="none" stroke="currentColor" stroke-width="1"/><rect x="0" y="1.6" width="10" height="1.5" fill="currentColor"/><path d="M1 3.4h8l-.6 8.6H1.6z" fill="currentColor"/><path d="M3.4 5v5.5M5 5v5.5M6.6 5v5.5" stroke="#e74c3c" stroke-width=".7"/></svg>
<div class="cb" style="top:646px"></div>
<div class="cell" style="left:269px;width:202px;top:636px;height:36px;line-height:36px;color:#4d4d4d">202104090013287320</div>
<div class="cell" style="left:471px;width:94px;top:636px;height:36px;line-height:36px;color:#4d4d4d">游客110</div>
<div class="cell" style="left:565px;width:326px;top:636px;height:36px;line-height:36px;color:#4d4d4d">无打扰一键检测清理微信单向好友周卡</div>
<div class="cell" style="left:891px;width:94px;top:636px;height:36px;line-height:36px;color:#4d4d4d">1.00</div>
<div class="cell" style="left:985px;width:95px;top:636px;height:36px;line-height:36px;color:#4d4d4d">1</div>
<div class="cell" style="left:1080px;width:93px;top:636px;height:36px;line-height:36px;color:#4d4d4d">1.00</div>
<div class="cell" style="left:1173px;width:94px;top:636px;height:36px;line-height:36px;color:#4d4d4d"><span class="badge" style="background:#777">未支付</span></div>
<div class="cell" style="left:1267px;width:190px;top:636px;height:36px;line-height:36px;color:#4d4d4d">2021-04-09 00:13:28</div>
<div class="cell" style="left:1457px;width:190px;top:636px;height:36px;line-height:36px;color:#4d4d4d">无</div>
<div class="op" style="left:1670px;top:645px;background:#1abc9c"></div>
<svg width="10" height="10" viewBox="0 0 12 12" style="position:absolute;left:1675px;top:650px;color:#fff"><path d="M8.6 0.2l3.2 3.2-7.6 7.6L0.6 11.4 1 7.8z" fill="currentColor"/></svg>
<div class="op" style="left:1694px;width:19px;top:645px;background:#e74c3c"></div>
<svg width="9" height="11" viewBox="0 0 10 12" style="position:absolute;left:1699px;top:649px;color:#fff"><path d="M3 1.6V0.4h4v1.2" fill="none" stroke="currentColor" stroke-width="1"/><rect x="0" y="1.6" width="10" height="1.5" fill="currentColor"/><path d="M1 3.4h8l-.6 8.6H1.6z" fill="currentColor"/><path d="M3.4 5v5.5M5 5v5.5M6.6 5v5.5" stroke="#e74c3c" stroke-width=".7"/></svg>
<div class="cb" style="top:682px"></div>
<div class="cell" style="left:269px;width:202px;top:672px;height:36px;line-height:36px;color:#4d4d4d">202104090013179856</div>
<div class="cell" style="left:471px;width:94px;top:672px;height:36px;line-height:36px;color:#4d4d4d">游客110</div>
<div class="cell" style="left:565px;width:326px;top:672px;height:36px;line-height:36px;color:#4d4d4d">无打扰一键检测清理微信单向好友周卡</div>
<div class="cell" style="left:891px;width:94px;top:672px;height:36px;line-height:36px;color:#4d4d4d">1.00</div>
<div class="cell" style="left:985px;width:95px;top:672px;height:36px;line-height:36px;color:#4d4d4d">1</div>
<div class="cell" style="left:1080px;width:93px;top:672px;height:36px;line-height:36px;color:#4d4d4d">1.00</div>
<div class="cell" style="left:1173px;width:94px;top:672px;height:36px;line-height:36px;color:#4d4d4d"><span class="badge" style="background:#777">未支付</span></div>
<div class="cell" style="left:1267px;width:190px;top:672px;height:36px;line-height:36px;color:#4d4d4d">2021-04-09 00:13:17</div>
<div class="cell" style="left:1457px;width:190px;top:672px;height:36px;line-height:36px;color:#4d4d4d">无</div>
<div class="op" style="left:1670px;top:681px;background:#1abc9c"></div>
<svg width="10" height="10" viewBox="0 0 12 12" style="position:absolute;left:1675px;top:686px;color:#fff"><path d="M8.6 0.2l3.2 3.2-7.6 7.6L0.6 11.4 1 7.8z" fill="currentColor"/></svg>
<div class="op" style="left:1694px;width:19px;top:681px;background:#e74c3c"></div>
<svg width="9" height="11" viewBox="0 0 10 12" style="position:absolute;left:1699px;top:685px;color:#fff"><path d="M3 1.6V0.4h4v1.2" fill="none" stroke="currentColor" stroke-width="1"/><rect x="0" y="1.6" width="10" height="1.5" fill="currentColor"/><path d="M1 3.4h8l-.6 8.6H1.6z" fill="currentColor"/><path d="M3.4 5v5.5M5 5v5.5M6.6 5v5.5" stroke="#e74c3c" stroke-width=".7"/></svg>
<div class="cb" style="top:718px"></div>
<div class="cell" style="left:269px;width:202px;top:708px;height:36px;line-height:36px;color:#4d4d4d">202104082327289524</div>
<div class="cell" style="left:471px;width:94px;top:708px;height:36px;line-height:36px;color:#4d4d4d">游客1</div>
<div class="cell" style="left:565px;width:326px;top:708px;height:36px;line-height:36px;color:#4d4d4d">红盟云卡系统 代安装</div>
<div class="cell" style="left:891px;width:94px;top:708px;height:36px;line-height:36px;color:#4d4d4d">10.00</div>
<div class="cell" style="left:985px;width:95px;top:708px;height:36px;line-height:36px;color:#4d4d4d">1</div>
<div class="cell" style="left:1080px;width:93px;top:708px;height:36px;line-height:36px;color:#4d4d4d">10.00</div>
<div class="cell" style="left:1173px;width:94px;top:708px;height:36px;line-height:36px;color:#4d4d4d"><span class="badge" style="background:#777">已过期</span></div>
<div class="cell" style="left:1267px;width:190px;top:708px;height:36px;line-height:36px;color:#4d4d4d">2021-04-08 23:27:28</div>
<div class="cell" style="left:1457px;width:190px;top:708px;height:36px;line-height:36px;color:#4d4d4d">无</div>
<div class="op" style="left:1670px;top:717px;background:#1abc9c"></div>
<svg width="10" height="10" viewBox="0 0 12 12" style="position:absolute;left:1675px;top:722px;color:#fff"><path d="M8.6 0.2l3.2 3.2-7.6 7.6L0.6 11.4 1 7.8z" fill="currentColor"/></svg>
<div class="op" style="left:1694px;width:19px;top:717px;background:#e74c3c"></div>
<svg width="9" height="11" viewBox="0 0 10 12" style="position:absolute;left:1699px;top:721px;color:#fff"><path d="M3 1.6V0.4h4v1.2" fill="none" stroke="currentColor" stroke-width="1"/><rect x="0" y="1.6" width="10" height="1.5" fill="currentColor"/><path d="M1 3.4h8l-.6 8.6H1.6z" fill="currentColor"/><path d="M3.4 5v5.5M5 5v5.5M6.6 5v5.5" stroke="#e74c3c" stroke-width=".7"/></svg>
</body></html>
